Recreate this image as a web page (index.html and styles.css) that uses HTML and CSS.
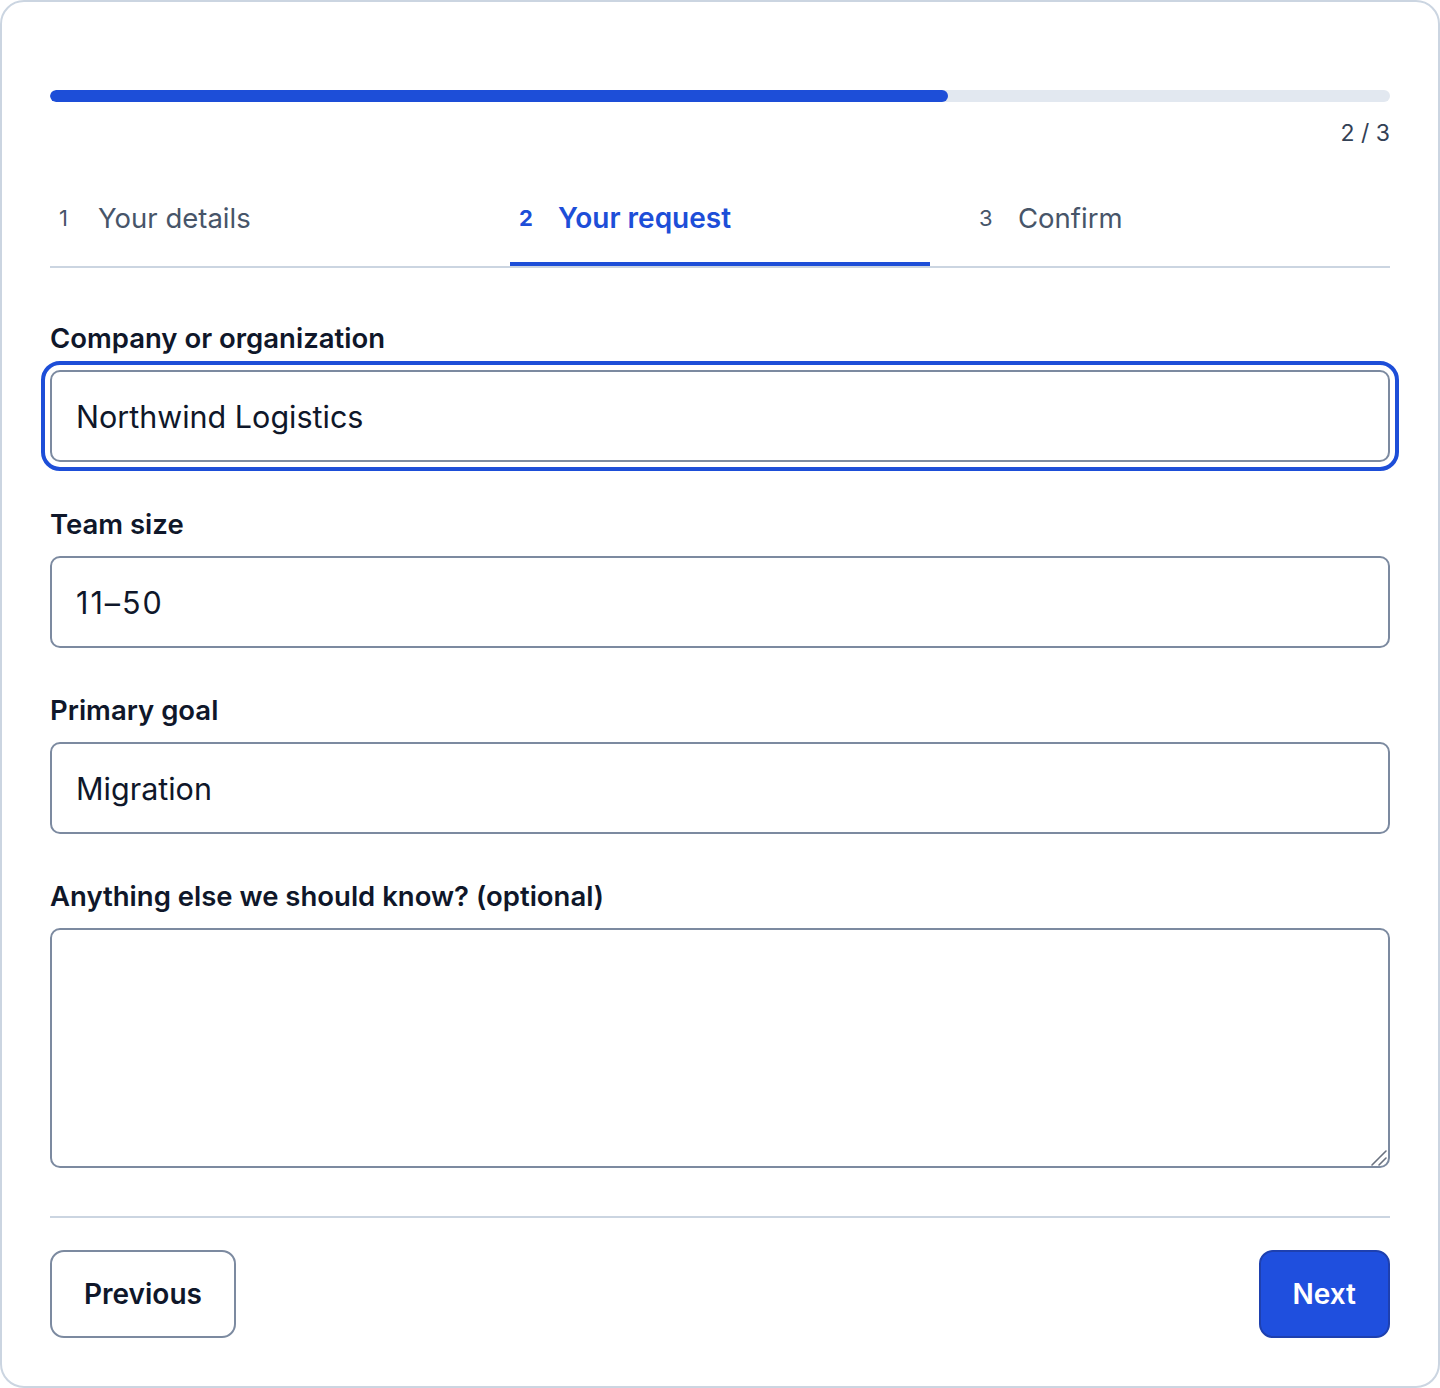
FILE: index.html
```html
<!DOCTYPE html>
<html lang="en">
<head>
<meta charset="utf-8">
<title>Your request</title>
<link rel="stylesheet" href="styles.css">
</head>
<body>
<main class="card">
  <div class="progress" role="progressbar" aria-valuemin="0" aria-valuemax="3" aria-valuenow="2">
    <div class="progress-fill" style="width: 67%"></div>
  </div>
  <div class="counter">2 / 3</div>
  <ol class="steps">
    <li class="step"><span class="step-num">1</span><span class="step-label">Your details</span></li>
    <li class="step step-active"><span class="step-num">2</span><span class="step-label">Your request</span></li>
    <li class="step"><span class="step-num">3</span><span class="step-label">Confirm</span></li>
  </ol>
  <form class="form">
    <div class="field">
      <label class="label" for="company">Company or organization</label>
      <input class="input is-focused" id="company" type="text" value="Northwind Logistics">
    </div>
    <div class="field">
      <label class="label" for="team">Team size</label>
      <input class="input input-num" id="team" type="text" value="11–50">
    </div>
    <div class="field">
      <label class="label" for="goal">Primary goal</label>
      <input class="input" id="goal" type="text" value="Migration">
    </div>
    <div class="field">
      <label class="label" for="notes">Anything else we should know? (optional)</label>
      <div class="textarea-wrap">
        <textarea class="input textarea" id="notes"></textarea>
        <svg class="resize-grip" width="18" height="18" viewBox="0 0 18 18" aria-hidden="true">
          <path d="M2 16 L16 2 M9 16 L16 9" stroke="#6b7280" stroke-width="1.6" stroke-linecap="round" fill="none"/>
        </svg>
      </div>
    </div>
  </form>
  <hr class="divider">
  <div class="actions">
    <button class="btn btn-secondary" type="button">Previous</button>
    <button class="btn btn-primary" type="button">Next</button>
  </div>
</main>
</body>
</html>
```
FILE: styles.css
```css
* { box-sizing: border-box; }
html, body { margin: 0; padding: 0; background: #ffffff; }
body {
  font-family: Inter, "Noto Sans", "Liberation Sans", sans-serif;
  color: #0f172a;
}
.card {
  width: 1440px;
  border: 2px solid #cbd5e1;
  border-radius: 24px;
  padding: 88px 48px 48px;
  background: #ffffff;
}
.progress {
  height: 12px;
  border-radius: 6px;
  background: #e2e8f0;
  overflow: hidden;
}
.progress-fill {
  height: 100%;
  background: #1d4ed8;
  border-radius: 6px;
}
.counter {
  margin-top: 16px;
  text-align: right;
  font-size: 23px;
  line-height: 30px;
  color: #334155;
}
.steps {
  list-style: none;
  margin: 24px 0 0;
  padding: 0;
  display: grid;
  grid-template-columns: repeat(3, 1fr);
  column-gap: 40px;
  border-bottom: 2px solid #cbd5e1;
}
.step {
  display: flex;
  align-items: center;
  padding: 28px 9px 26px;
  border-bottom: 4px solid transparent;
  color: #475569;
  line-height: 36px;
}
.step-num {
  width: 22px;
  font-size: 22px;
  margin-right: 17px;
}
.step-label { font-size: 27.5px; }
.step-active { border-bottom-color: #1d4ed8; color: #1d4ed8; }
.step-active .step-num { font-weight: 700; }
.step-active .step-label { font-weight: 600; font-size: 28px; }
.form {
  margin-top: 54px;
  display: flex;
  flex-direction: column;
  gap: 46px;
}
.field {
  display: flex;
  flex-direction: column;
  gap: 16px;
}
.label {
  font-size: 27.5px;
  line-height: 32px;
  font-weight: 600;
  color: #0f172a;
}
.input {
  display: block;
  width: 100%;
  height: 92px;
  margin: 0;
  padding: 0 24px;
  border: 2px solid #7c8aa0;
  border-radius: 10px;
  background: #ffffff;
  font-family: inherit;
  font-size: 30.5px;
  color: #0f172a;
  outline: none;
}
.input-num { letter-spacing: 2px; }
.is-focused {
  outline: 4px solid #1d4ed8;
  outline-offset: 5px;
}
.textarea-wrap {
  position: relative;
}
.textarea {
  height: 240px;
  padding: 20px 24px;
  resize: none;
}
.resize-grip {
  position: absolute;
  right: 2px;
  bottom: 1px;
  pointer-events: none;
}
.divider {
  margin: 48px 0 0;
  border: 0;
  height: 2px;
  background: #cbd5e1;
}
.actions {
  margin-top: 32px;
  display: flex;
  justify-content: space-between;
}
.btn {
  height: 88px;
  padding: 0 32px;
  border-radius: 14px;
  font-family: inherit;
  font-size: 28px;
  font-weight: 600;
  cursor: pointer;
}
.btn-secondary {
  background: #ffffff;
  border: 2px solid #7c8aa0;
  color: #0f172a;
}
.btn-primary {
  background: #1f4fde;
  border: 2px solid #1e40af;
  color: #ffffff;
}
```
